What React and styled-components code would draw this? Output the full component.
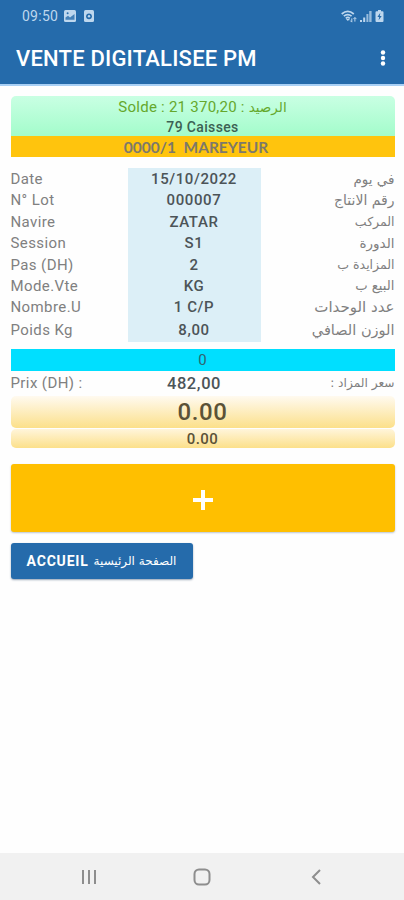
import React from 'react';
import styled, { createGlobalStyle } from 'styled-components';

const GlobalStyle = createGlobalStyle`
* {
    box-sizing: border-box;
}
body {
    margin: 0;
    background: #fff;
    font-family: Roboto, "DejaVu Sans", sans-serif;
}
`;

const Screen = styled.div`
    display: flex;
    flex-direction: column;
    width: 404px;
    height: 900px;
    overflow: hidden;
    background: #fefefe;
`;

const Header = styled.header`
    height: 86px;
    background: #256bab;
    border-bottom: 2px solid #a9d0f5;
    color: #fff;
`;

const StatusBar = styled.div`
    display: flex;
    align-items: center;
    justify-content: space-between;
    height: 32px;
    padding: 0 20px 0 22px;
    color: #bed7ee;
`;

const StatusGroup = styled.div`
    display: flex;
    align-items: center;
    gap: ${props => props.gap}px;
`;

const Clock = styled.span`
    font-size: 14px;
    letter-spacing: 0.25px;
    margin-right: -2px;
`;

const TitleBar = styled.div`
    display: flex;
    align-items: center;
    justify-content: space-between;
    height: 52px;
    padding: 0 18px 0 16px;
`;

const Title = styled.h1`
    margin: 0;
    font-size: 22px;
    font-weight: 500;
    line-height: 53px;
    letter-spacing: 0.2px;
    white-space: nowrap;
`;

const Content = styled.main`
    flex: 1;
    padding: 10px 9.5px 0 10.5px;
`;

const Balance = styled.div`
    height: 40px;
    border-radius: 5px 5px 0 0;
    background: linear-gradient(#c9ffe3, #a3fccb);
    text-align: center;
`;

const Solde = styled.div`
    display: flex;
    justify-content: center;
    height: 21px;
    line-height: 22px;
    font-size: 15px;
    letter-spacing: 0.25px;
    color: #65a82c;
    white-space: pre;
`;

const Caisses = styled.div`
    height: 19px;
    line-height: 20px;
    font-size: 14px;
    font-weight: 500;
    letter-spacing: 0.35px;
    color: #3c6153;
`;

const Buyer = styled.div`
    height: 21px;
    line-height: 22px;
    background: #ffc40d;
    color: #7d796a;
    font-family: Lato, sans-serif;
    font-size: 15.5px;
    font-weight: 700;
    text-align: center;
    white-space: pre;
    padding-right: 13px;
`;

const Arabic = styled.span`
    font-family: "DejaVu Sans", sans-serif;
    font-size: ${props => props.size || 14}px;
    letter-spacing: 0;
    white-space: nowrap;
`;

const Details = styled.div`
    margin-top: 11px;
`;

const Row = styled.div`
    display: grid;
    grid-template-columns: 117px 133px 1fr;
    grid-template-rows: 100%;
    height: ${props => props.height || 21.4}px;
    line-height: ${props => (props.height || 21.4) + 1.2}px;
    color: #808080;
`;

const Label = styled.span`
    font-size: 15px;
    letter-spacing: 0.4px;
    white-space: nowrap;
`;

const Value = styled.span`
    background: ${props => props.plain ? 'transparent' : '#dceff7'};
    color: #4c5458;
    font-size: ${props => props.plain ? 16.5 : 15}px;
    font-weight: 500;
    letter-spacing: 0.6px;
    text-align: center;
`;

const ArabicLabel = styled.span`
    direction: rtl;
    text-align: right;
    display: flex;
    justify-content: flex-start;
`;

const Counter = styled.div`
    height: 21.5px;
    margin-top: 7px;
    line-height: 23px;
    background: #00dfff;
    color: #2f6570;
    font-size: 15px;
    text-align: center;
`;

const Total = styled.div`
    height: ${props => props.large ? 32 : 19}px;
    line-height: ${props => props.large ? 33 : 20}px;
    margin-top: ${props => props.large ? 1 : 1.5}px;
    border-radius: 5px;
    background: linear-gradient(${props => props.large ? '#fffaf0' : '#fff5db'}, #fce08a);
    color: #5b5237;
    font-size: ${props => props.large ? 24 : 15}px;
    font-weight: 500;
    letter-spacing: ${props => props.large ? 0.6 : 0.5}px;
    text-align: center;
`;

const AddButton = styled.button`
    display: flex;
    align-items: center;
    justify-content: center;
    width: 100%;
    height: 67.5px;
    margin-top: 16px;
    padding: 4px 0 0;
    border: 0;
    border-radius: 3px;
    background: #ffbf00;
    box-shadow: 0 1px 2px rgba(60, 90, 120, 0.35);
`;

const HomeButton = styled.button`
    display: flex;
    align-items: center;
    justify-content: center;
    gap: 5px;
    width: 182px;
    height: 35.5px;
    margin-top: 11.5px;
    padding: 0;
    border: 0;
    border-radius: 3px;
    background: #256bab;
    box-shadow: 0 1px 2px rgba(20, 50, 90, 0.45);
    color: #fff;
    font-family: Roboto, sans-serif;
    font-size: 14px;
    font-weight: 700;
    letter-spacing: 0.8px;

    ${Arabic} {
        font-weight: 400;
    }
`;

const NavBar = styled.nav`
    display: grid;
    grid-template-columns: 1fr 1fr 1fr;
    align-items: center;
    justify-items: center;
    height: 47px;
    padding: 1px 33px 0;
    background: #f1f1f1;
    color: #8e8e8e;
`;

const rows = [
    { label: 'Date', value: '15/10/2022', arabic: 'في يوم', size: 13.5 },
    { label: 'N° Lot', value: '000007', arabic: 'رقم الانتاج', size: 14 },
    { label: 'Navire', value: 'ZATAR', arabic: 'المركب', size: 12.5 },
    { label: 'Session', value: 'S1', arabic: 'الدورة', size: 13.5 },
    { label: 'Pas (DH)', value: '2', arabic: 'المزايدة ب', size: 12.5 },
    { label: 'Mode.Vte', value: 'KG', arabic: 'البيع ب', size: 13.2 },
    { label: 'Nombre.U', value: '1 C/P', arabic: 'عدد الوحدات', size: 15 },
    { label: 'Poids Kg', value: '8,00', arabic: 'الوزن الصافي', size: 14.5, height: 24.7 },
];

const PictureIcon = () => (
    <svg width="12" height="12" viewBox="0 0 12 12">
        <rect width="12" height="12" rx="1.5" fill="currentColor" />
        <path d="M1.5 9.8V7.5L4 5.8l2 1.6L10.5 4v5.8z" fill="#256bab" opacity="0.8" />
        <circle cx="3.6" cy="3.2" r="1" fill="#256bab" />
    </svg>
);

const SpeakerIcon = () => (
    <svg width="10" height="12" viewBox="0 0 10 12">
        <rect width="10" height="12" rx="1.5" fill="currentColor" />
        <circle cx="5" cy="6.3" r="2.9" fill="#256bab" />
        <circle cx="5" cy="6.3" r="1.2" fill="currentColor" />
    </svg>
);

const WifiIcon = () => (
    <svg width="16" height="13" viewBox="0 0 16 13" fill="none" stroke="currentColor" strokeWidth="1.7">
        <path d="M.7 4C4.5.6 9 .6 12.8 4M2.8 6.2c2.4-2 5.4-2 7.8 0M4.8 8.3c1.2-1 2.8-1 4 0" />
        <path d="M5 9l1.8 2L9 9z" fill="currentColor" stroke="none" />
        <path d="M10.8 12V8.4M9.3 10.6l1.5 1.6M13.9 7.6v4M12.4 9.1l1.5-1.6 1.5 1.6" strokeWidth="1" />
    </svg>
);

const SignalIcon = () => (
    <svg width="12" height="12" viewBox="0 0 12 12" fill="currentColor">
        <path d="M0 10h2v2H0zM3.2 7.5h2V12h-2z" />
        <path d="M6.4 4h2v8h-2zM9.2 1h2.4v11H9.2z" opacity="0.75" />
    </svg>
);

const BatteryIcon = () => (
    <svg width="9" height="12" viewBox="0 0 9 12">
        <path d="M3 0h3v1.3h1.5q1 0 1 1V11q0 1-1 1h-6q-1 0-1-1V2.3q0-1 1-1H3z" fill="currentColor" />
        <path d="M5.3 2.8L2.4 7h1.8l-.6 3.2L6.7 6H4.8z" fill="#256bab" />
    </svg>
);

const MoreIcon = () => (
    <svg width="6" height="18" viewBox="0 0 6 18" fill="#fff">
        <circle cx="3" cy="3.5" r="2.2" />
        <circle cx="3" cy="9" r="2.2" />
        <circle cx="3" cy="14.5" r="2.2" />
    </svg>
);

const App = () => (
    <Screen>
        <GlobalStyle />
        <Header>
            <StatusBar>
                <StatusGroup gap={8}>
                    <Clock>09:50</Clock>
                    <PictureIcon />
                    <SpeakerIcon />
                </StatusGroup>
                <StatusGroup gap={3}>
                    <WifiIcon />
                    <SignalIcon />
                    <BatteryIcon />
                </StatusGroup>
            </StatusBar>
            <TitleBar>
                <Title>VENTE DIGITALISEE PM</Title>
                <MoreIcon />
            </TitleBar>
        </Header>
        <Content>
            <Balance>
                <Solde>
                    <span>Solde : 21 370,20 : </span>
                    <Arabic size={13.5}>الرصيد</Arabic>
                </Solde>
                <Caisses>79 Caisses</Caisses>
            </Balance>
            <Buyer>{'0000/1  MAREYEUR'}</Buyer>
            <Details>
                {rows.map(row => (
                    <Row key={row.label} height={row.height}>
                        <Label>{row.label}</Label>
                        <Value>{row.value}</Value>
                        <ArabicLabel><Arabic size={row.size}>{row.arabic}</Arabic></ArabicLabel>
                    </Row>
                ))}
            </Details>
            <Counter>0</Counter>
            <Row height={24}>
                <Label>Prix (DH) :</Label>
                <Value plain>482,00</Value>
                <ArabicLabel><Arabic size={12.2}>سعر المزاد :</Arabic></ArabicLabel>
            </Row>
            <Total large>0.00</Total>
            <Total>0.00</Total>
            <AddButton aria-label="Ajouter">
                <svg width="20" height="20" viewBox="0 0 20 20" stroke="#fff" strokeWidth="4">
                    <path d="M10 0v20M0 10h20" />
                </svg>
            </AddButton>
            <HomeButton>
                <span>ACCUEIL</span>
                <Arabic size={12}>الصفحة الرئيسية</Arabic>
            </HomeButton>
        </Content>
        <NavBar>
            <svg width="16" height="16" viewBox="0 0 16 16" stroke="currentColor" strokeWidth="2">
                <path d="M2 1v14M8 1v14M14 1v14" />
            </svg>
            <svg width="18" height="18" viewBox="0 0 18 18" fill="none" stroke="currentColor" strokeWidth="2">
                <rect x="1.5" y="1.5" width="15" height="15" rx="4.5" />
            </svg>
            <svg width="12" height="16" viewBox="0 0 12 16" fill="none" stroke="currentColor" strokeWidth="2">
                <path d="M11 1L4 8l7 7" />
            </svg>
        </NavBar>
    </Screen>
);

export default App;
